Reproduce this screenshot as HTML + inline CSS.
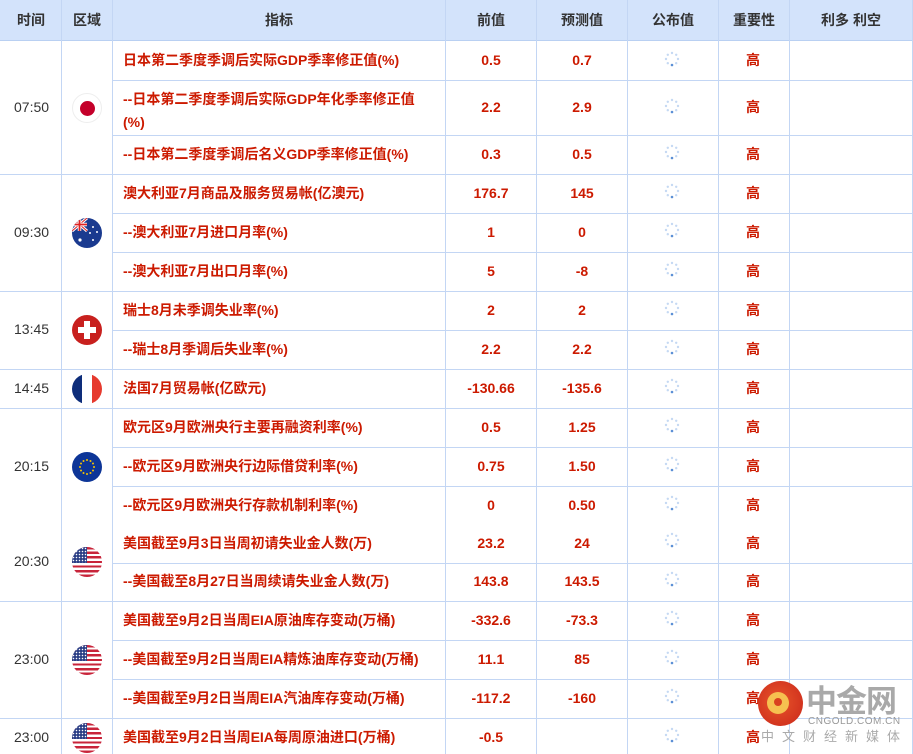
<!DOCTYPE html>
<html><head><meta charset="utf-8"><style>
*{margin:0;padding:0;box-sizing:border-box}
body{width:913px;height:754px;overflow:hidden;background:#fff;position:relative;font-family:"Liberation Sans","Noto Sans CJK SC",sans-serif}
.h{position:absolute;top:0;left:0;width:913px;height:41px;background:#d3e3fb;border-bottom:1px solid #b9d0f2}
.t{position:absolute;white-space:nowrap;line-height:16px}
.hd{font-size:14px;color:#333;top:12px;font-weight:bold;transform:translateX(-50%)}
.vl{position:absolute;top:0;height:754px;width:1px;background:#c3d6f4}
.hl{position:absolute;height:1px;background:#c3d6f4}
.ind{font-size:14px;font-weight:bold;color:#cc1a00;left:123px}
.num{font-size:14px;font-weight:bold;color:#cc1a00;transform:translateX(-50%)}
.gao{font-size:14px;color:#cc1a00;left:746px;font-weight:bold}
.tm{font-size:14px;color:#333;left:14px}
.sp{position:absolute;left:664px;width:16px;height:16px}
.flag{position:absolute;left:72px;width:30px;height:30px;border-radius:50%;overflow:hidden}
</style></head><body>
<div class="h"></div>
<div class="t hd" style="left:31px">时间</div>
<div class="t hd" style="left:87px">区域</div>
<div class="t hd" style="left:279px">指标</div>
<div class="t hd" style="left:491px">前值</div>
<div class="t hd" style="left:582px">预测值</div>
<div class="t hd" style="left:673px">公布值</div>
<div class="t hd" style="left:754px">重要性</div>
<div class="t hd" style="left:851px">利多 利空</div>

<div class="vl" style="left:61px"></div>
<div class="vl" style="left:112px"></div>
<div class="vl" style="left:445px"></div>
<div class="vl" style="left:536px"></div>
<div class="vl" style="left:627px"></div>
<div class="vl" style="left:718px"></div>
<div class="vl" style="left:789px"></div>
<div class="vl" style="left:912px"></div>

<div class="hl" style="top:174px;left:0;width:913px"></div>
<div class="hl" style="top:291px;left:0;width:913px"></div>
<div class="hl" style="top:369px;left:0;width:913px"></div>
<div class="hl" style="top:408px;left:0;width:913px"></div>
<div class="hl" style="top:601px;left:0;width:913px"></div>
<div class="hl" style="top:718px;left:0;width:913px"></div>
<div class="hl" style="top:80px;left:112px;width:801px"></div>
<div class="hl" style="top:135px;left:112px;width:801px"></div>
<div class="hl" style="top:213px;left:112px;width:801px"></div>
<div class="hl" style="top:252px;left:112px;width:801px"></div>
<div class="hl" style="top:330px;left:112px;width:801px"></div>
<div class="hl" style="top:447px;left:112px;width:801px"></div>
<div class="hl" style="top:486px;left:112px;width:801px"></div>
<div class="hl" style="top:563px;left:112px;width:801px"></div>
<div class="hl" style="top:640px;left:112px;width:801px"></div>
<div class="hl" style="top:679px;left:112px;width:801px"></div>

<div class="t tm" style="top:99px">07:50</div>
<div class="t tm" style="top:224px">09:30</div>
<div class="t tm" style="top:321px">13:45</div>
<div class="t tm" style="top:380px">14:45</div>
<div class="t tm" style="top:458px">20:15</div>
<div class="t tm" style="top:553px">20:30</div>
<div class="t tm" style="top:651px">23:00</div>
<div class="t tm" style="top:729px">23:00</div>

<div class="flag" style="top:93px;background:#fff;border:1px solid #eee"><div style="position:absolute;left:7px;top:7px;width:15px;height:15px;border-radius:50%;background:#c4002a"></div></div>
<div class="flag" style="top:218px;background:#1a3a8f"><svg width="30" height="30"><rect width="15" height="13" fill="#1a3a8f"/><path d="M0 0L15 13M15 0L0 13" stroke="#fff" stroke-width="3"/><path d="M0 0L15 13M15 0L0 13" stroke="#d22" stroke-width="1"/><path d="M7.5 0V13M0 6.5H15" stroke="#fff" stroke-width="3.5"/><path d="M7.5 0V13M0 6.5H15" stroke="#d22" stroke-width="1.8"/><g fill="#fff"><circle cx="8" cy="22" r="1.6"/><circle cx="21" cy="9" r="1"/><circle cx="25" cy="14" r="1"/><circle cx="21" cy="22" r="1"/><circle cx="18" cy="15" r="1"/></g></svg></div>
<div class="flag" style="top:315px;background:#c8201e"><div style="position:absolute;left:12px;top:6px;width:6px;height:18px;background:#fff"></div><div style="position:absolute;left:6px;top:12px;width:18px;height:6px;background:#fff"></div></div>
<div class="flag" style="top:374px;background:linear-gradient(90deg,#0e2d7a 0 33%,#fff 33% 66%,#e63a2e 66%)"></div>
<div class="flag" style="top:452px;background:#0d3597"><svg width="30" height="30"><g fill="#f5c400"><circle cx="15" cy="8" r="1"/><circle cx="18.5" cy="9" r="1"/><circle cx="21" cy="11.5" r="1"/><circle cx="22" cy="15" r="1"/><circle cx="21" cy="18.5" r="1"/><circle cx="18.5" cy="21" r="1"/><circle cx="15" cy="22" r="1"/><circle cx="11.5" cy="21" r="1"/><circle cx="9" cy="18.5" r="1"/><circle cx="8" cy="15" r="1"/><circle cx="9" cy="11.5" r="1"/><circle cx="11.5" cy="9" r="1"/></g></svg></div>
<div class="flag us" style="top:547px"></div>
<div class="flag us" style="top:645px"></div>
<div class="flag us" style="top:723px"></div>
<style>.us{background:repeating-linear-gradient(180deg,#c8243a 0 2.3px,#fff 2.3px 4.6px)}.us::after{content:"";position:absolute;left:0;top:0;width:15px;height:16px;background:radial-gradient(#fff 0.6px,transparent 0.9px) 0 0/3px 3px,#2b3f86}</style>

<div class="t ind" style="top:52px">日本第二季度季调后实际GDP季率修正值(%)</div>
<div class="t ind" style="top:88px;line-height:23px">--日本第二季度季调后实际GDP年化季率修正值<br>(%)</div>
<div class="t ind" style="top:146px">--日本第二季度季调后名义GDP季率修正值(%)</div>
<div class="t ind" style="top:185px">澳大利亚7月商品及服务贸易帐(亿澳元)</div>
<div class="t ind" style="top:224px">--澳大利亚7月进口月率(%)</div>
<div class="t ind" style="top:263px">--澳大利亚7月出口月率(%)</div>
<div class="t ind" style="top:302px">瑞士8月未季调失业率(%)</div>
<div class="t ind" style="top:341px">--瑞士8月季调后失业率(%)</div>
<div class="t ind" style="top:380px">法国7月贸易帐(亿欧元)</div>
<div class="t ind" style="top:419px">欧元区9月欧洲央行主要再融资利率(%)</div>
<div class="t ind" style="top:458px">--欧元区9月欧洲央行边际借贷利率(%)</div>
<div class="t ind" style="top:497px">--欧元区9月欧洲央行存款机制利率(%)</div>
<div class="t ind" style="top:535px">美国截至9月3日当周初请失业金人数(万)</div>
<div class="t ind" style="top:573px">--美国截至8月27日当周续请失业金人数(万)</div>
<div class="t ind" style="top:612px">美国截至9月2日当周EIA原油库存变动(万桶)</div>
<div class="t ind" style="top:651px">--美国截至9月2日当周EIA精炼油库存变动(万桶)</div>
<div class="t ind" style="top:690px">--美国截至9月2日当周EIA汽油库存变动(万桶)</div>
<div class="t ind" style="top:729px">美国截至9月2日当周EIA每周原油进口(万桶)</div>

<div class="t num" style="left:491px;top:52px">0.5</div><div class="t num" style="left:582px;top:52px">0.7</div>
<div class="t num" style="left:491px;top:99px">2.2</div><div class="t num" style="left:582px;top:99px">2.9</div>
<div class="t num" style="left:491px;top:146px">0.3</div><div class="t num" style="left:582px;top:146px">0.5</div>
<div class="t num" style="left:491px;top:185px">176.7</div><div class="t num" style="left:582px;top:185px">145</div>
<div class="t num" style="left:491px;top:224px">1</div><div class="t num" style="left:582px;top:224px">0</div>
<div class="t num" style="left:491px;top:263px">5</div><div class="t num" style="left:582px;top:263px">-8</div>
<div class="t num" style="left:491px;top:302px">2</div><div class="t num" style="left:582px;top:302px">2</div>
<div class="t num" style="left:491px;top:341px">2.2</div><div class="t num" style="left:582px;top:341px">2.2</div>
<div class="t num" style="left:491px;top:380px">-130.66</div><div class="t num" style="left:582px;top:380px">-135.6</div>
<div class="t num" style="left:491px;top:419px">0.5</div><div class="t num" style="left:582px;top:419px">1.25</div>
<div class="t num" style="left:491px;top:458px">0.75</div><div class="t num" style="left:582px;top:458px">1.50</div>
<div class="t num" style="left:491px;top:497px">0</div><div class="t num" style="left:582px;top:497px">0.50</div>
<div class="t num" style="left:491px;top:535px">23.2</div><div class="t num" style="left:582px;top:535px">24</div>
<div class="t num" style="left:491px;top:573px">143.8</div><div class="t num" style="left:582px;top:573px">143.5</div>
<div class="t num" style="left:491px;top:612px">-332.6</div><div class="t num" style="left:582px;top:612px">-73.3</div>
<div class="t num" style="left:491px;top:651px">11.1</div><div class="t num" style="left:582px;top:651px">85</div>
<div class="t num" style="left:491px;top:690px">-117.2</div><div class="t num" style="left:582px;top:690px">-160</div>
<div class="t num" style="left:491px;top:729px">-0.5</div>

<div class="t gao" style="top:52px">高</div><div class="t gao" style="top:99px">高</div><div class="t gao" style="top:146px">高</div>
<div class="t gao" style="top:185px">高</div><div class="t gao" style="top:224px">高</div><div class="t gao" style="top:263px">高</div>
<div class="t gao" style="top:302px">高</div><div class="t gao" style="top:341px">高</div><div class="t gao" style="top:380px">高</div>
<div class="t gao" style="top:419px">高</div><div class="t gao" style="top:458px">高</div><div class="t gao" style="top:497px">高</div>
<div class="t gao" style="top:535px">高</div><div class="t gao" style="top:573px">高</div><div class="t gao" style="top:612px">高</div>
<div class="t gao" style="top:651px">高</div><div class="t gao" style="top:690px">高</div><div class="t gao" style="top:729px">高</div>

<svg width="0" height="0" style="position:absolute"><defs><g id="s"><g fill="#c5d9f3"><circle cx="8" cy="2" r="1.2"/><circle cx="12.2" cy="3.8" r="1.2"/><circle cx="14" cy="8" r="1.2"/><circle cx="12.2" cy="12.2" r="1.2"/><circle cx="3.8" cy="12.2" r="1.2"/><circle cx="2" cy="8" r="1.2"/><circle cx="3.8" cy="3.8" r="1.2"/></g><circle cx="8" cy="14" r="1.3" fill="#5b8fd6"/></g></defs></svg>
<svg class="sp" style="top:51px"><use href="#s"/></svg>
<svg class="sp" style="top:98px"><use href="#s"/></svg>
<svg class="sp" style="top:144px"><use href="#s"/></svg>
<svg class="sp" style="top:183px"><use href="#s"/></svg>
<svg class="sp" style="top:222px"><use href="#s"/></svg>
<svg class="sp" style="top:261px"><use href="#s"/></svg>
<svg class="sp" style="top:300px"><use href="#s"/></svg>
<svg class="sp" style="top:339px"><use href="#s"/></svg>
<svg class="sp" style="top:378px"><use href="#s"/></svg>
<svg class="sp" style="top:417px"><use href="#s"/></svg>
<svg class="sp" style="top:456px"><use href="#s"/></svg>
<svg class="sp" style="top:495px"><use href="#s"/></svg>
<svg class="sp" style="top:532px"><use href="#s"/></svg>
<svg class="sp" style="top:571px"><use href="#s"/></svg>
<svg class="sp" style="top:610px"><use href="#s"/></svg>
<svg class="sp" style="top:649px"><use href="#s"/></svg>
<svg class="sp" style="top:688px"><use href="#s"/></svg>
<svg class="sp" style="top:727px"><use href="#s"/></svg>

<div style="position:absolute;left:758px;top:681px;width:45px;height:45px;border-radius:50%;background:radial-gradient(circle at 45% 45%,#e8552a,#c9261a)"></div>
<div style="position:absolute;left:767px;top:692px;width:22px;height:22px;border-radius:50%;background:#f6c050"></div>
<div style="position:absolute;left:774px;top:698px;width:8px;height:8px;border-radius:50%;background:#d9401f"></div>
<div class="t" style="left:806px;top:681px;font-size:31px;font-weight:bold;color:#a9a9a9;letter-spacing:-1px;font-family:'Noto Sans CJK SC',sans-serif;line-height:36px">中金网</div>
<div class="t" style="left:808px;top:716px;font-size:10px;color:#999;letter-spacing:0.5px;line-height:12px">CNGOLD.COM.CN</div>
<div class="t" style="left:761px;top:729px;font-size:13px;color:#aaa;letter-spacing:8px">中文财经新媒体</div>
</body></html>
